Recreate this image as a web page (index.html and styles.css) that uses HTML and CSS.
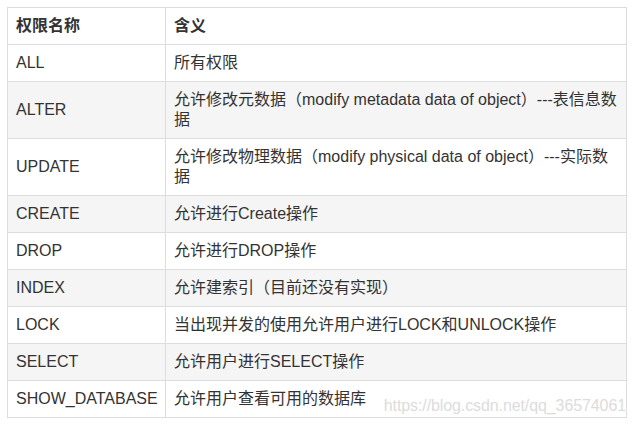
FILE: index.html
```html
<!DOCTYPE html>
<html lang="zh-CN">
<head>
<meta charset="utf-8">
<title>权限</title>
<link rel="stylesheet" href="styles.css">
</head>
<body>
<div class="wrap">
<table class="perm">
  <colgroup><col class="c1"><col class="c2"></colgroup>
  <thead>
    <tr><th>权限名称</th><th>含义</th></tr>
  </thead>
  <tbody>
    <tr><td>ALL</td><td>所有权限</td></tr>
    <tr><td>ALTER</td><td>允许修改元数据（modify metadata data of object）---表信息数据</td></tr>
    <tr><td>UPDATE</td><td>允许修改物理数据（modify physical data of object）---实际数据</td></tr>
    <tr><td>CREATE</td><td>允许进行Create操作</td></tr>
    <tr><td>DROP</td><td>允许进行DROP操作</td></tr>
    <tr><td>INDEX</td><td>允许建索引（目前还没有实现）</td></tr>
    <tr><td>LOCK</td><td>当出现并发的使用允许用户进行LOCK和UNLOCK操作</td></tr>
    <tr><td>SELECT</td><td>允许用户进行SELECT操作</td></tr>
    <tr><td>SHOW_DATABASE</td><td>允许用户查看可用的数据库</td></tr>
  </tbody>
</table>
<span class="watermark">https://blog.csdn.net/qq_36574061</span>
</div>
</body>
</html>
```
FILE: styles.css
```css
html, body {
  margin: 0;
  padding: 0;
  background: #fff;
}
.wrap {
  position: relative;
  padding: 7px;
  width: 620px;
}
.perm {
  border-collapse: collapse;
  table-layout: fixed;
  width: 620px;
  font-family: "Liberation Sans", "Noto Sans CJK SC", sans-serif;
  font-size: 16px;
  line-height: 20px;
  color: #333;
}
.c1 { width: 158px; }
.perm th, .perm td {
  border: 1px solid #ddd;
  padding: 8px 8px;
  text-align: left;
  vertical-align: middle;
}
.perm th {
  font-weight: bold;
  color: #333;
}
.perm tbody tr:nth-child(even) {
  background: #f5f5f5;
}
.watermark {
  position: absolute;
  right: 8px;
  bottom: 10px;
  font-family: "Liberation Sans", sans-serif;
  font-size: 16px;
  color: #dcdcdc;
  text-shadow: 1px 0 0 #fff, -1px 0 0 #fff;
  letter-spacing: -0.1px;
}
```
